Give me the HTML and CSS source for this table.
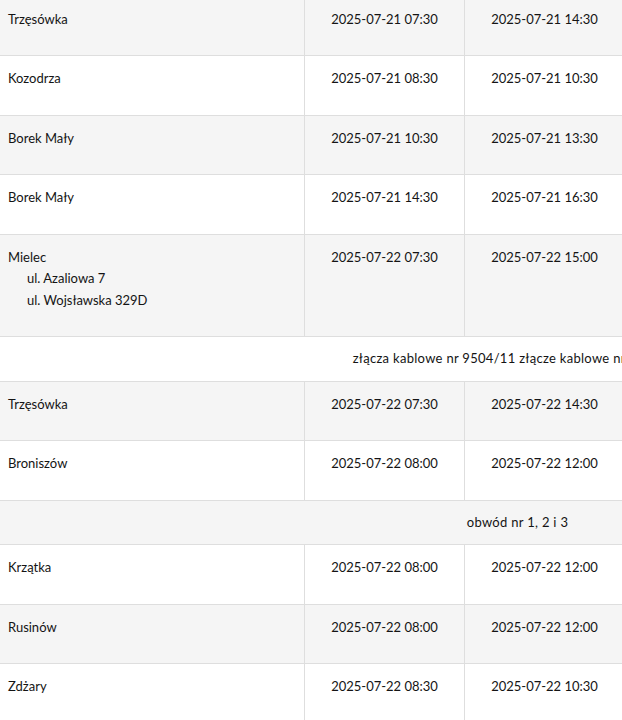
FILE: index.html
```html
<!DOCTYPE html>
<html lang="pl">
<head>
<meta charset="utf-8">
<title>Wyłączenia</title>
<link rel="stylesheet" href="styles.css">
</head>
<body>
<div class="wrap">
<table class="outages">
<colgroup>
<col class="c-place"><col class="c-time"><col class="c-time"><col class="c-rest">
</colgroup>
<tbody>
<tr><td class="place">Trzęsówka</td><td class="time">2025-07-21 07:30</td><td class="time">2025-07-21 14:30</td><td class="rest"></td></tr>
<tr><td class="place">Kozodrza</td><td class="time">2025-07-21 08:30</td><td class="time">2025-07-21 10:30</td><td class="rest"></td></tr>
<tr><td class="place">Borek Mały</td><td class="time">2025-07-21 10:30</td><td class="time">2025-07-21 13:30</td><td class="rest"></td></tr>
<tr><td class="place">Borek Mały</td><td class="time">2025-07-21 14:30</td><td class="time">2025-07-21 16:30</td><td class="rest"></td></tr>
<tr><td class="place">Mielec
<ul class="streets"><li>ul. Azaliowa 7</li><li>ul. Wojsławska 329D</li></ul></td><td class="time">2025-07-22 07:30</td><td class="time">2025-07-22 15:00</td><td class="rest"></td></tr>
<tr><td class="note" colspan="4">złącza kablowe nr 9504/11 złącze kablowe nr 5072/11</td></tr>
<tr><td class="place">Trzęsówka</td><td class="time">2025-07-22 07:30</td><td class="time">2025-07-22 14:30</td><td class="rest"></td></tr>
<tr><td class="place">Broniszów</td><td class="time">2025-07-22 08:00</td><td class="time">2025-07-22 12:00</td><td class="rest"></td></tr>
<tr><td class="note" colspan="4">obwód nr 1, 2 i 3</td></tr>
<tr><td class="place">Krzątka</td><td class="time">2025-07-22 08:00</td><td class="time">2025-07-22 12:00</td><td class="rest"></td></tr>
<tr><td class="place">Rusinów</td><td class="time">2025-07-22 08:00</td><td class="time">2025-07-22 12:00</td><td class="rest"></td></tr>
<tr><td class="place">Zdżary</td><td class="time">2025-07-22 08:30</td><td class="time">2025-07-22 10:30</td><td class="rest"></td></tr>
</tbody>
</table>
</div>
</body>
</html>
```
FILE: styles.css
```css
html, body {
  margin: 0;
  padding: 0;
  background: #fff;
  overflow: hidden;
}
.wrap {
  width: 622px;
  height: 720px;
  overflow: hidden;
}
.outages {
  width: 1035px;
  table-layout: fixed;
  border-collapse: separate;
  border-spacing: 0;
  margin-top: -3.5px;
  font-family: Lato, "Open Sans", sans-serif;
  font-size: 13px;
  line-height: 21.5px;
  color: #141414;
}
.c-place { width: 305px; }
.c-time { width: 160px; }
.c-rest { width: 410px; }
.outages tr:nth-child(odd) { background: #f5f5f5; }
.outages tr:nth-child(even) { background: #fff; }
.outages td {
  vertical-align: top;
  padding: 12px 8px 25px;
  border-bottom: 1px solid #dedede;
  border-right: 1px solid #dedede;
}
.outages td.time { text-align: center; }
.outages td.note {
  text-align: center;
  padding: 11px 8px;
  border-right: none;
  letter-spacing: 0.3px;
}
.streets {
  list-style: none;
  margin: 0;
  padding: 0 0 0 19px;
}
```
